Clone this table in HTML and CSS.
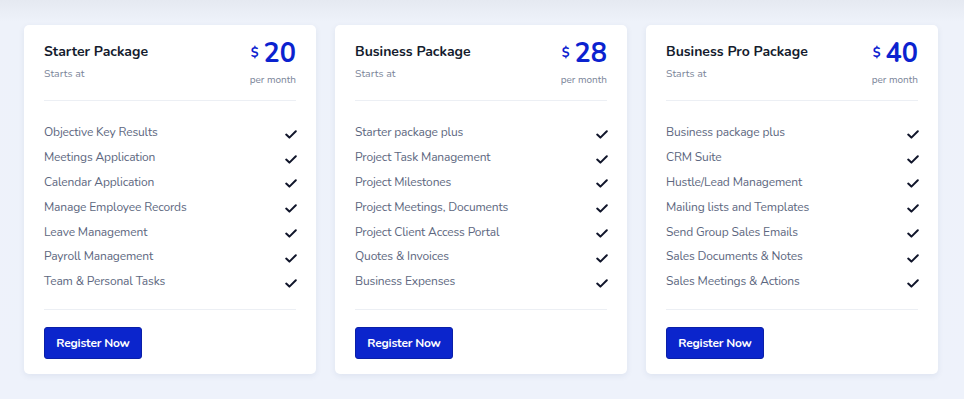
FILE: index.html
```html
<!DOCTYPE html>
<html>
<head>
<meta charset="utf-8">
<link rel="stylesheet" href="styles.css">
</head>
<body>
<div class="page">
  <div class="card">
    <div class="head">
      <div>
        <div class="title">Starter Package</div>
        <div class="sub">Starts at</div>
      </div>
      <div class="price">
        <div class="amount"><span class="cur">$</span>20</div>
        <div class="per">per month</div>
      </div>
    </div>
    <ul class="list">
      <li>Objective Key Results<svg viewBox="0 0 12 9"><path d="M1.2 4.6 4.4 7.6 10.8 1.3"/></svg></li>
      <li>Meetings Application<svg viewBox="0 0 12 9"><path d="M1.2 4.6 4.4 7.6 10.8 1.3"/></svg></li>
      <li>Calendar Application<svg viewBox="0 0 12 9"><path d="M1.2 4.6 4.4 7.6 10.8 1.3"/></svg></li>
      <li>Manage Employee Records<svg viewBox="0 0 12 9"><path d="M1.2 4.6 4.4 7.6 10.8 1.3"/></svg></li>
      <li>Leave Management<svg viewBox="0 0 12 9"><path d="M1.2 4.6 4.4 7.6 10.8 1.3"/></svg></li>
      <li>Payroll Management<svg viewBox="0 0 12 9"><path d="M1.2 4.6 4.4 7.6 10.8 1.3"/></svg></li>
      <li>Team &amp; Personal Tasks<svg viewBox="0 0 12 9"><path d="M1.2 4.6 4.4 7.6 10.8 1.3"/></svg></li>
    </ul>
    <div class="foot"><button class="btn">Register Now</button></div>
  </div>
  <div class="card">
    <div class="head">
      <div>
        <div class="title">Business Package</div>
        <div class="sub">Starts at</div>
      </div>
      <div class="price">
        <div class="amount"><span class="cur">$</span>28</div>
        <div class="per">per month</div>
      </div>
    </div>
    <ul class="list">
      <li>Starter package plus<svg viewBox="0 0 12 9"><path d="M1.2 4.6 4.4 7.6 10.8 1.3"/></svg></li>
      <li>Project Task Management<svg viewBox="0 0 12 9"><path d="M1.2 4.6 4.4 7.6 10.8 1.3"/></svg></li>
      <li>Project Milestones<svg viewBox="0 0 12 9"><path d="M1.2 4.6 4.4 7.6 10.8 1.3"/></svg></li>
      <li>Project Meetings, Documents<svg viewBox="0 0 12 9"><path d="M1.2 4.6 4.4 7.6 10.8 1.3"/></svg></li>
      <li>Project Client Access Portal<svg viewBox="0 0 12 9"><path d="M1.2 4.6 4.4 7.6 10.8 1.3"/></svg></li>
      <li>Quotes &amp; Invoices<svg viewBox="0 0 12 9"><path d="M1.2 4.6 4.4 7.6 10.8 1.3"/></svg></li>
      <li>Business Expenses<svg viewBox="0 0 12 9"><path d="M1.2 4.6 4.4 7.6 10.8 1.3"/></svg></li>
    </ul>
    <div class="foot"><button class="btn">Register Now</button></div>
  </div>
  <div class="card">
    <div class="head">
      <div>
        <div class="title">Business Pro Package</div>
        <div class="sub">Starts at</div>
      </div>
      <div class="price">
        <div class="amount"><span class="cur">$</span>40</div>
        <div class="per">per month</div>
      </div>
    </div>
    <ul class="list">
      <li>Business package plus<svg viewBox="0 0 12 9"><path d="M1.2 4.6 4.4 7.6 10.8 1.3"/></svg></li>
      <li>CRM Suite<svg viewBox="0 0 12 9"><path d="M1.2 4.6 4.4 7.6 10.8 1.3"/></svg></li>
      <li>Hustle/Lead Management<svg viewBox="0 0 12 9"><path d="M1.2 4.6 4.4 7.6 10.8 1.3"/></svg></li>
      <li>Mailing lists and Templates<svg viewBox="0 0 12 9"><path d="M1.2 4.6 4.4 7.6 10.8 1.3"/></svg></li>
      <li>Send Group Sales Emails<svg viewBox="0 0 12 9"><path d="M1.2 4.6 4.4 7.6 10.8 1.3"/></svg></li>
      <li>Sales Documents &amp; Notes<svg viewBox="0 0 12 9"><path d="M1.2 4.6 4.4 7.6 10.8 1.3"/></svg></li>
      <li>Sales Meetings &amp; Actions<svg viewBox="0 0 12 9"><path d="M1.2 4.6 4.4 7.6 10.8 1.3"/></svg></li>
    </ul>
    <div class="foot"><button class="btn">Register Now</button></div>
  </div>
</div>
</body>
</html>
```
FILE: styles.css
```css
* { box-sizing: border-box; }
html, body { margin: 0; height: 100%; }
body {
  background: linear-gradient(#e5e9f1 0px, #eef2fa 22px, #eef2fb 100%);
  font-family: "Nunito", "Lato", "Noto Sans", sans-serif;
}
.page {
  display: flex;
  gap: 19px;
  padding: 25px 24px 0 24px;
}
.card {
  width: 292px;
  height: 349px;
  background: #fff;
  border-radius: 5px;
  box-shadow: 0 2px 6px rgba(40, 60, 110, 0.08);
  padding: 0 20px;
  display: flex;
  flex-direction: column;
}
.head {
  display: flex;
  justify-content: space-between;
  padding-top: 16px;
  height: 76px;
  border-bottom: 1px solid #eceff4;
}
.title {
  font-size: 14px;
  font-weight: 700;
  color: #141b2d;
  line-height: 20px;
  margin-top: 1px;
}
.sub {
  font-size: 10.5px;
  color: #7b8599;
  margin-top: 4px;
}
.price { text-align: right; }
.amount {
  color: #0b22cf;
  font-size: 27px;
  font-weight: 700;
  line-height: 24px;
}
.cur {
  font-size: 13px;
  font-weight: 700;
  vertical-align: 5px;
  margin-right: 5px;
}
.per {
  font-size: 10px;
  color: #7b8599;
  margin-top: 7px;
}
.list {
  list-style: none;
  margin: 0;
  padding: 19px 0 0;
  height: 209px;
  border-bottom: 1px solid #eceff4;
}
.list li {
  display: flex;
  justify-content: space-between;
  align-items: center;
  height: 24.8px;
  font-size: 12px;
  letter-spacing: -0.15px;
  color: #5d6780;
}
.list svg {
  width: 12px;
  height: 9px;
  margin-right: -1px;
  margin-top: 4px;
  fill: none;
  stroke: #10152a;
  stroke-width: 2;
  stroke-linecap: round;
  stroke-linejoin: round;
}
.foot { padding-top: 17px; }
.btn {
  width: 98px;
  height: 32px;
  background: #0b25cc;
  border: 1px solid #0a1fa8;
  border-radius: 3px;
  color: #fff;
  font-family: inherit;
  font-size: 12px;
  letter-spacing: -0.2px;
  font-weight: 700;
  padding: 0;
}
```
